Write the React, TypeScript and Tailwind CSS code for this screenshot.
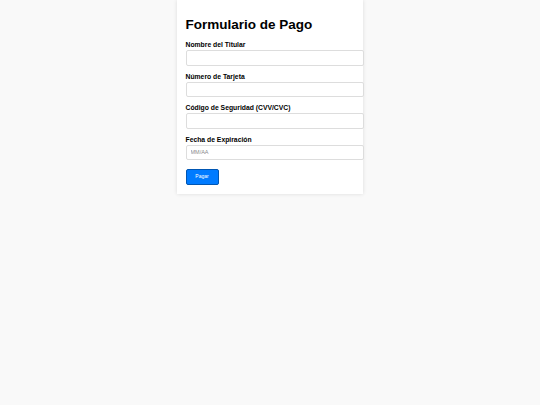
export default function App() {
  const fields = [
    { label: "Nombre del Titular", ph: "" },
    { label: "Número de Tarjeta", ph: "" },
    { label: "Código de Seguridad (CVV/CVC)", ph: "" },
    { label: "Fecha de Expiración", ph: "MM/AA" },
  ];
  return (
    <div className="min-h-[405px] w-full bg-[#f9f9f9] font-['Liberation_Sans',Arial,sans-serif]">
      <div className="mx-auto w-[186px] bg-white pl-[8.5px] pt-[16px] pb-[9px] shadow-[0_0_4px_rgba(0,0,0,0.12)]">
        <h1 className="m-0 text-[13.5px] font-bold leading-[18px] text-black">Formulario de Pago</h1>
        <div className="mt-[6px] flex flex-col gap-[6px]">
          {fields.map((f) => (
            <div key={f.label}>
              <label className="block text-[6.8px] font-bold leading-[9px] text-black">{f.label}</label>
              <input
                placeholder={f.ph}
                className="mt-[1px] block h-[15.5px] w-[178px] rounded-[2px] border border-[#dddddd] bg-white px-[4px] text-[5.5px] text-black placeholder:text-[#8a8a8a] outline-none"
              />
            </div>
          ))}
        </div>
        <button className="mt-[9px] flex h-[16px] w-[33px] items-center justify-center rounded-[2px] border border-[#0056b3] bg-[#007bff] text-[5px] text-white">
          Pagar
        </button>
      </div>
    </div>
  );
}
